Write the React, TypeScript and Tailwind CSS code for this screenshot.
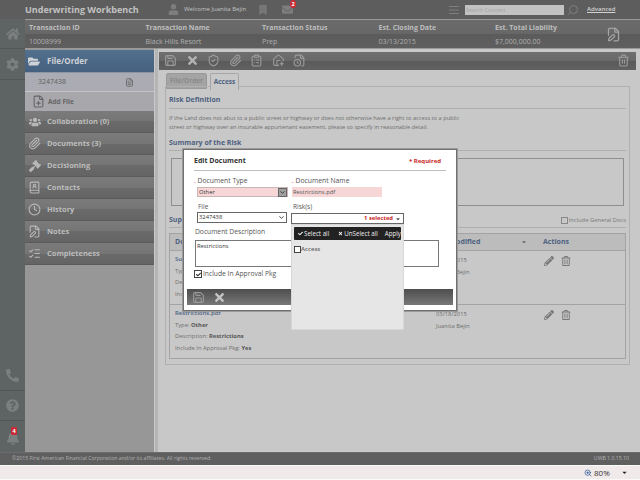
import React from 'react';
import { FaHome, FaCog, FaTimes, FaPhoneAlt, FaQuestionCircle, FaBell, FaUser, FaBookmark, FaEnvelope, FaFolderOpen, FaPencilAlt, FaRegTrashAlt, FaGavel, FaUsers, FaCheck, FaCaretDown } from 'react-icons/fa';
import { Save, ShieldCheck, Paperclip, ClipboardList, FileClock, FilePlus, FileText, FileEdit, Clock, BookUser, ListChecks, Search, AlignJustify, Trash2, ChevronDown, ZoomIn, HousePlus } from 'lucide-react';

const navItems = [
  { label: 'Collaboration (0)', icon: <FaUsers size={12} /> },
  { label: 'Documents (3)', icon: <Paperclip size={13} /> },
  { label: 'Decisioning', icon: <FaGavel size={12} /> },
  { label: 'Contacts', icon: <BookUser size={13} /> },
  { label: 'History', icon: <Clock size={13} /> },
  { label: 'Notes', icon: <FileEdit size={13} /> },
  { label: 'Completeness', icon: <ListChecks size={13} /> },
];

const columns = [
  { title: 'Transaction ID', value: '10008999' },
  { title: 'Transaction Name', value: 'Black Hills Resort' },
  { title: 'Transaction Status', value: 'Prep' },
  { title: 'Est. Closing Date', value: '03/13/2015' },
  { title: 'Est. Total Liability', value: '$7,000,000.00' },
];

const DocRow = ({ name, date }: { name: string; date: string }) => (
  <div className="h-[54px] flex border-b border-[#a3a3a3] pl-[5px] pt-[3px]">
    <div className="w-[261px] text-[5.8px] text-[#6d6d6d] leading-[11.5px]">
      <p className="font-semibold text-[#4d6180] text-[6px]">{name}</p>
      <p>Type: <b className="text-[#555]">Other</b></p>
      <p>Description: <b className="text-[#555]">Restrictions</b></p>
      <p>Include In Approval Pkg: <b className="text-[#555]">Yes</b></p>
    </div>
    <div className="w-[108px] text-[5.8px] text-[#6d6d6d] leading-[12px]">
      <p>{date}</p>
      <p>Juanita Bejin</p>
    </div>
    <div className="flex gap-[7px] text-[#777] pt-[2px] h-[14px]">
      <FaPencilAlt size={10} />
      <FaRegTrashAlt size={10} />
    </div>
  </div>
);

export default function App() {
  return (
    <div className="relative w-[640px] h-[480px] overflow-hidden flex flex-col bg-[#c8c8c8]" style={{ fontFamily: '"Open Sans", "Liberation Sans", sans-serif' }}>
      {/* Header */}
      <header className="h-[19px] shrink-0 flex items-center bg-[#5d5d5d] text-[#c4c4c4]">
        <h1 className="ml-[25px] w-[143px] text-[9px] font-bold text-[#c2c2c2] whitespace-nowrap">Underwriting Workbench</h1>
        <FaUser size={11} className="text-[#7e7e7e]" />
        <span className="ml-[5px] w-[74px] text-[6px] whitespace-nowrap">Welcome Juanita Bejin</span>
        <FaBookmark size={10} className="text-[#777]" />
        <div className="relative ml-[14px]">
          <FaEnvelope size={11} className="text-[#7e7e7e]" />
          <span className="absolute -top-[4px] left-[8px] w-[6px] h-[8px] rounded-full bg-[#c92c36] text-white text-[5.5px] font-bold text-center leading-[8px]">2</span>
        </div>
        <AlignJustify size={12} className="ml-[155px] text-[#7e7e7e]" />
        <div className="ml-[5px] w-[99px] h-[10px] bg-[#c2c2c2] text-[#a2a2a2] text-[5.5px] leading-[10px] px-[1px]">Search Content</div>
        <Search size={12} className="ml-[3px] -scale-x-100 text-[#808080]" />
        <span className="ml-[8px] text-[6px] font-semibold underline text-[#d2d2d2]">Advanced</span>
      </header>

      <div className="flex-1 flex min-h-0">
        {/* Left rail */}
        <aside className="w-[25px] shrink-0 bg-[#5e6363] flex flex-col items-center text-[#7c7f7f]">
          <div className="h-[30px] w-full flex items-center justify-center border-b border-[#535757]"><FaHome size={14} /></div>
          <div className="h-[31px] w-full flex items-center justify-center border-b border-[#535757]"><FaCog size={13} /></div>
          <div className="flex-1" />
          <div className="h-[31px] w-full flex items-center justify-center border-b border-[#535757]"><FaPhoneAlt size={13} /></div>
          <div className="h-[30px] w-full flex items-center justify-center border-b border-[#535757]"><FaQuestionCircle size={13} /></div>
          <div className="relative h-[31px] w-full flex items-center justify-center pt-[2px]">
            <FaBell size={14} />
            <span className="absolute top-[6px] left-[11px] w-[6px] h-[8px] rounded-[1px] bg-[#c92c36] text-white text-[5.5px] font-bold text-center leading-[8px]">4</span>
          </div>
        </aside>

        <div className="flex-1 min-w-0 flex flex-col">
          {/* Transaction bar */}
          <div className="h-[30px] shrink-0 flex border-y border-[#9a9a9a] bg-[linear-gradient(#6b6b6b_0%,#676767_50%,#5b5b5b_50%,#5f5f5f_100%)] pl-[4px]">
            {columns.map((c) => (
              <div key={c.title} className="w-[116.5px] text-[7px] leading-[14px] pt-[0.5px] whitespace-nowrap">
                <p className="font-bold text-[#bdbdbd]">{c.title}</p>
                <p className="text-[#b0b0b0]">{c.value}</p>
              </div>
            ))}
            <div className="flex items-center ml-[-6px] text-[#a6a6a6]"><FileEdit size={15} /></div>
          </div>

          <div className="flex-1 flex min-h-0">
            {/* Nav */}
            <nav className="w-[129px] shrink-0 bg-[#979797] pt-px">
              <div className="h-[23px] flex items-center bg-[linear-gradient(#53708f,#46607f)] text-[#cfd2d6] border-b border-[#8d95a2]">
                <FaFolderOpen size={11} className="ml-[3px] w-[12px]" />
                <span className="ml-[7px] text-[8px] font-bold">File/Order</span>
              </div>
              <div className="h-[19px] flex items-center justify-between bg-[#abacb3] border-b border-[#c3c3c8] pl-[13px] pr-[20px] text-[#5f5f5f] text-[7px]">
                <span>3247438</span>
                <FileText size={9} />
              </div>
              <div className="h-[19px] flex items-center bg-[#a7a7ac] pl-[7px] text-[#666] text-[6.5px] font-bold">
                <FilePlus size={13} />
                <span className="ml-[3px]">Add File</span>
              </div>
              {navItems.map((n) => (
                <div key={n.label} className="h-[22px] flex items-center bg-[linear-gradient(#7b7b7b_0%,#757575_50%,#6a6a6a_50%,#646464_100%)] border-b border-[#5a5a5a] text-[#bdbdbd]">
                  <span className="w-[18px] flex justify-center pl-[1px] text-[#b8b8b8]">{n.icon}</span>
                  <span className="ml-[4px] text-[7.5px] font-bold whitespace-nowrap">{n.label}</span>
                </div>
              ))}
            </nav>

            {/* Content */}
            <main className="flex-1 min-w-0 flex flex-col border-l-[3px] border-[#b5b5b5] pl-px pr-[4px] pt-[3px] ml-px">
              <div className="h-[18px] shrink-0 flex items-center gap-[8.5px] pl-[5px] pb-[1px] bg-[linear-gradient(#6f6f6f_0%,#686868_50%,#5a5a5a_50%,#616161_100%)] text-[#9c9c9c]">
                <Save size={13} />
                <FaTimes size={13} className="text-[#b3b3b3]" />
                <ShieldCheck size={13} />
                <Paperclip size={13} />
                <ClipboardList size={13} />
                <HousePlus size={13} />
                <FileClock size={13} />
                <Trash2 size={13} className="ml-auto mr-[6px]" />
              </div>

              <div className="flex pl-[7px] pt-[3px] h-[17px] shrink-0 gap-[3px]">
                <div className="w-[41px] h-[16px] bg-[#a4a4a4] border border-[#999] rounded-t-[2px] text-[#8a8a8a] text-[6.5px] font-bold text-center leading-[14px] whitespace-nowrap">File/Order</div>
                <div className="w-[29px] h-[17px] bg-[#c8c8c8] border border-b-0 border-[#a6a6a6] rounded-t-[2px] text-[#4d6180] text-[6.5px] font-bold text-center leading-[15px] z-10">Access</div>
              </div>

              <section className="ml-[6px] mr-[6px] h-[279px] -mt-px border border-[#b0b0b0] px-[3px] pt-[7px]">
                <h2 className="text-[7px] font-bold text-[#4d6180] leading-[12px] border-b border-[#aeaeae] pb-[2px]">Risk Definition</h2>
                <p className="mt-[5px] text-[5.7px] leading-[9px] text-[#6f6f6f] w-[298px]">If the Land does not abut to a public street or highway or does not otherwise have a right to access to a public street or highway over an insurable appurtenant easement, please so specify in reasonable detail.</p>
                <h2 className="mt-[5px] text-[7px] font-bold text-[#4d6180] leading-[12px] border-b border-[#aeaeae] pb-[1px]">Summary of the Risk</h2>
                <div className="mt-[7px] h-[48px] ml-[2px] mr-[2px] border border-[#8f8f8f]" />
                <div className="mt-[9px] flex items-center justify-between h-[13px] border-b border-[#aeaeae] pb-[2px]">
                  <h2 className="text-[7px] font-bold text-[#4d6180]">Supporting Documents</h2>
                  <label className="flex items-center text-[5.8px] text-[#777]">
                    <span className="w-[7px] h-[7px] border border-[#888] mr-px" />
                    Include General Docs
                  </label>
                </div>
                <div className="mt-[5px] border-[1.5px] border-b-0 border-[#a3a3a3]">
                  <div className="h-[17px] flex items-center bg-[#bcbcbc] border-b border-[#a3a3a3] pl-[5px] text-[7px] font-bold text-[#4d6180]">
                    <span className="w-[258px]">Document</span>
                    <span className="w-[88px] whitespace-nowrap">Last Modified</span>
                    <span className="w-[22px]"><FaCaretDown size={6} className="text-[#666]" /></span>
                    <span>Actions</span>
                  </div>
                  <DocRow name="Survey.pdf" date="03/18/2015" />
                  <DocRow name="Restrictions.pdf" date="03/18/2015" />
                </div>
              </section>
            </main>
          </div>
        </div>
      </div>

      {/* Footer */}
      <footer className="h-[13px] shrink-0 flex items-center justify-between bg-[#5f5f5f] border-t border-[#6b6b6b] pl-[12px] pr-[11px] text-[5.2px] text-[#b3b3b3]">
        <span>©2015 First American Financial Corporation and/or its affiliates. All rights reserved.</span>
        <span>UWB 1.0.15.10</span>
      </footer>

      {/* Browser status bar */}
      <div className="h-[15px] shrink-0 flex items-center justify-end bg-[#f1eaea] border-y border-[#fafafa] text-[8px] text-[#333] pr-[12px]">
        <ZoomIn size={8} className="text-[#1e4f8f] mr-[2px]" />
        <span className="w-[27px]">80%</span>
        <FaCaretDown size={7} className="text-[#222]" />
      </div>

      {/* Edit Document modal */}
      <div className="absolute left-[183px] top-[149px] w-[274px] h-[162px] bg-white border border-[#707070] shadow-[0_0_0_1px_#9a9a9a] flex flex-col px-[3px] pb-[5px]">
        <div className="flex items-center justify-between h-[19px] mx-[7px] border-b border-[#bdbdbd] mt-[2px]">
          <span className="text-[7px] font-bold text-[#333]">Edit Document</span>
          <span className="text-[6px] font-bold text-[#c81e1e] mr-[5px]">* Required</span>
        </div>

        <div className="flex mt-[5px] ml-[10px]">
          <div className="w-[95px]">
            <p className="text-[6.8px] text-[#555] leading-[10px] whitespace-nowrap"><span className="text-[#d33] -ml-[3px]">. </span>Document Type</p>
            <div className="mt-[1px] w-[91px] h-[10px] bg-[#f6d6d6] border border-[#c9b5b5] flex items-center justify-between text-[5.8px] text-[#333] pl-px">
              Other
              <span className="w-[9px] h-[9px] bg-[#a0a0a0] border border-[#666] flex items-center justify-center"><ChevronDown size={7} strokeWidth={3} /></span>
            </div>
            <p className="mt-[5px] ml-px text-[6.5px] text-[#555] leading-[9px]">File</p>
            <div className="mt-[1px] w-[90px] h-[11px] bg-white border border-[#666] flex items-center justify-between text-[5.8px] text-[#333] pl-px pr-[1px]">
              3247438
              <ChevronDown size={7} strokeWidth={3} />
            </div>
          </div>
          <div className="w-[100px]">
            <p className="text-[6.8px] text-[#555] leading-[10px] whitespace-nowrap"><span className="text-[#d33]">. </span>Document Name</p>
            <div className="mt-[1px] w-[90px] h-[10px] bg-[#f6d6d6] text-[5.8px] leading-[10px] text-[#555] pl-px">Restrictions.pdf</div>
            <p className="mt-[5px] ml-[1px] text-[6.5px] text-[#555] leading-[9px]">Risk(s)</p>
          </div>
        </div>

        <p className="mt-[4px] ml-[8px] text-[6.7px] text-[#555] leading-[10px]">Document Description</p>
        <div className="mt-[3px] ml-[8px] w-[244px] h-[27px] border border-[#777] text-[5.8px] text-[#333] pl-px leading-[10px]">Restrictions</div>
        <label className="mt-[2px] ml-[7px] flex items-center text-[6.7px] text-[#555] h-[10px]">
          <span className="w-[8px] h-[8px] border border-[#444] mr-px flex items-center justify-center"><FaCheck size={5} className="text-[#222]" /></span>
          Include In Approval Pkg
        </label>
        <div className="mt-auto h-[16px] bg-[linear-gradient(#4d4d4d,#787878)] flex items-center gap-[8px] pl-[5px] text-[#aaa]">
          <Save size={13} className="text-[#999]" />
          <FaTimes size={13} className="text-[#c4c4c4]" />
        </div>
      </div>

      {/* Risk multi select */}
      <div className="absolute left-[291px] top-[213px] w-[113px]">
        <div className="h-[11px] bg-white border border-[#666] flex items-center justify-end pr-[2px] text-[5.8px] font-bold text-[#c81e1e]">
          1 selected
          <FaCaretDown size={6} className="ml-[2px] text-[#555]" />
        </div>
        <div className="h-[106px] bg-[#e6e6e6] border border-[#d6d6d6] p-[2px]">
          <div className="h-[13px] w-[107px] bg-[#222] rounded-[1px] flex items-center text-[6.2px] text-[#eee] pl-[4px] whitespace-nowrap">
            <FaCheck size={5} />
            <span className="ml-px">Select all</span>
            <FaTimes size={5} className="ml-[9px]" />
            <span className="ml-px">UnSelect all</span>
            <span className="ml-[7px]">Apply</span>
          </div>
          <label className="mt-[5px] flex items-center text-[6px] font-semibold text-[#666]">
            <span className="w-[7px] h-[7px] bg-white border border-[#444]" />
            Access
          </label>
        </div>
      </div>
    </div>
  );
}
